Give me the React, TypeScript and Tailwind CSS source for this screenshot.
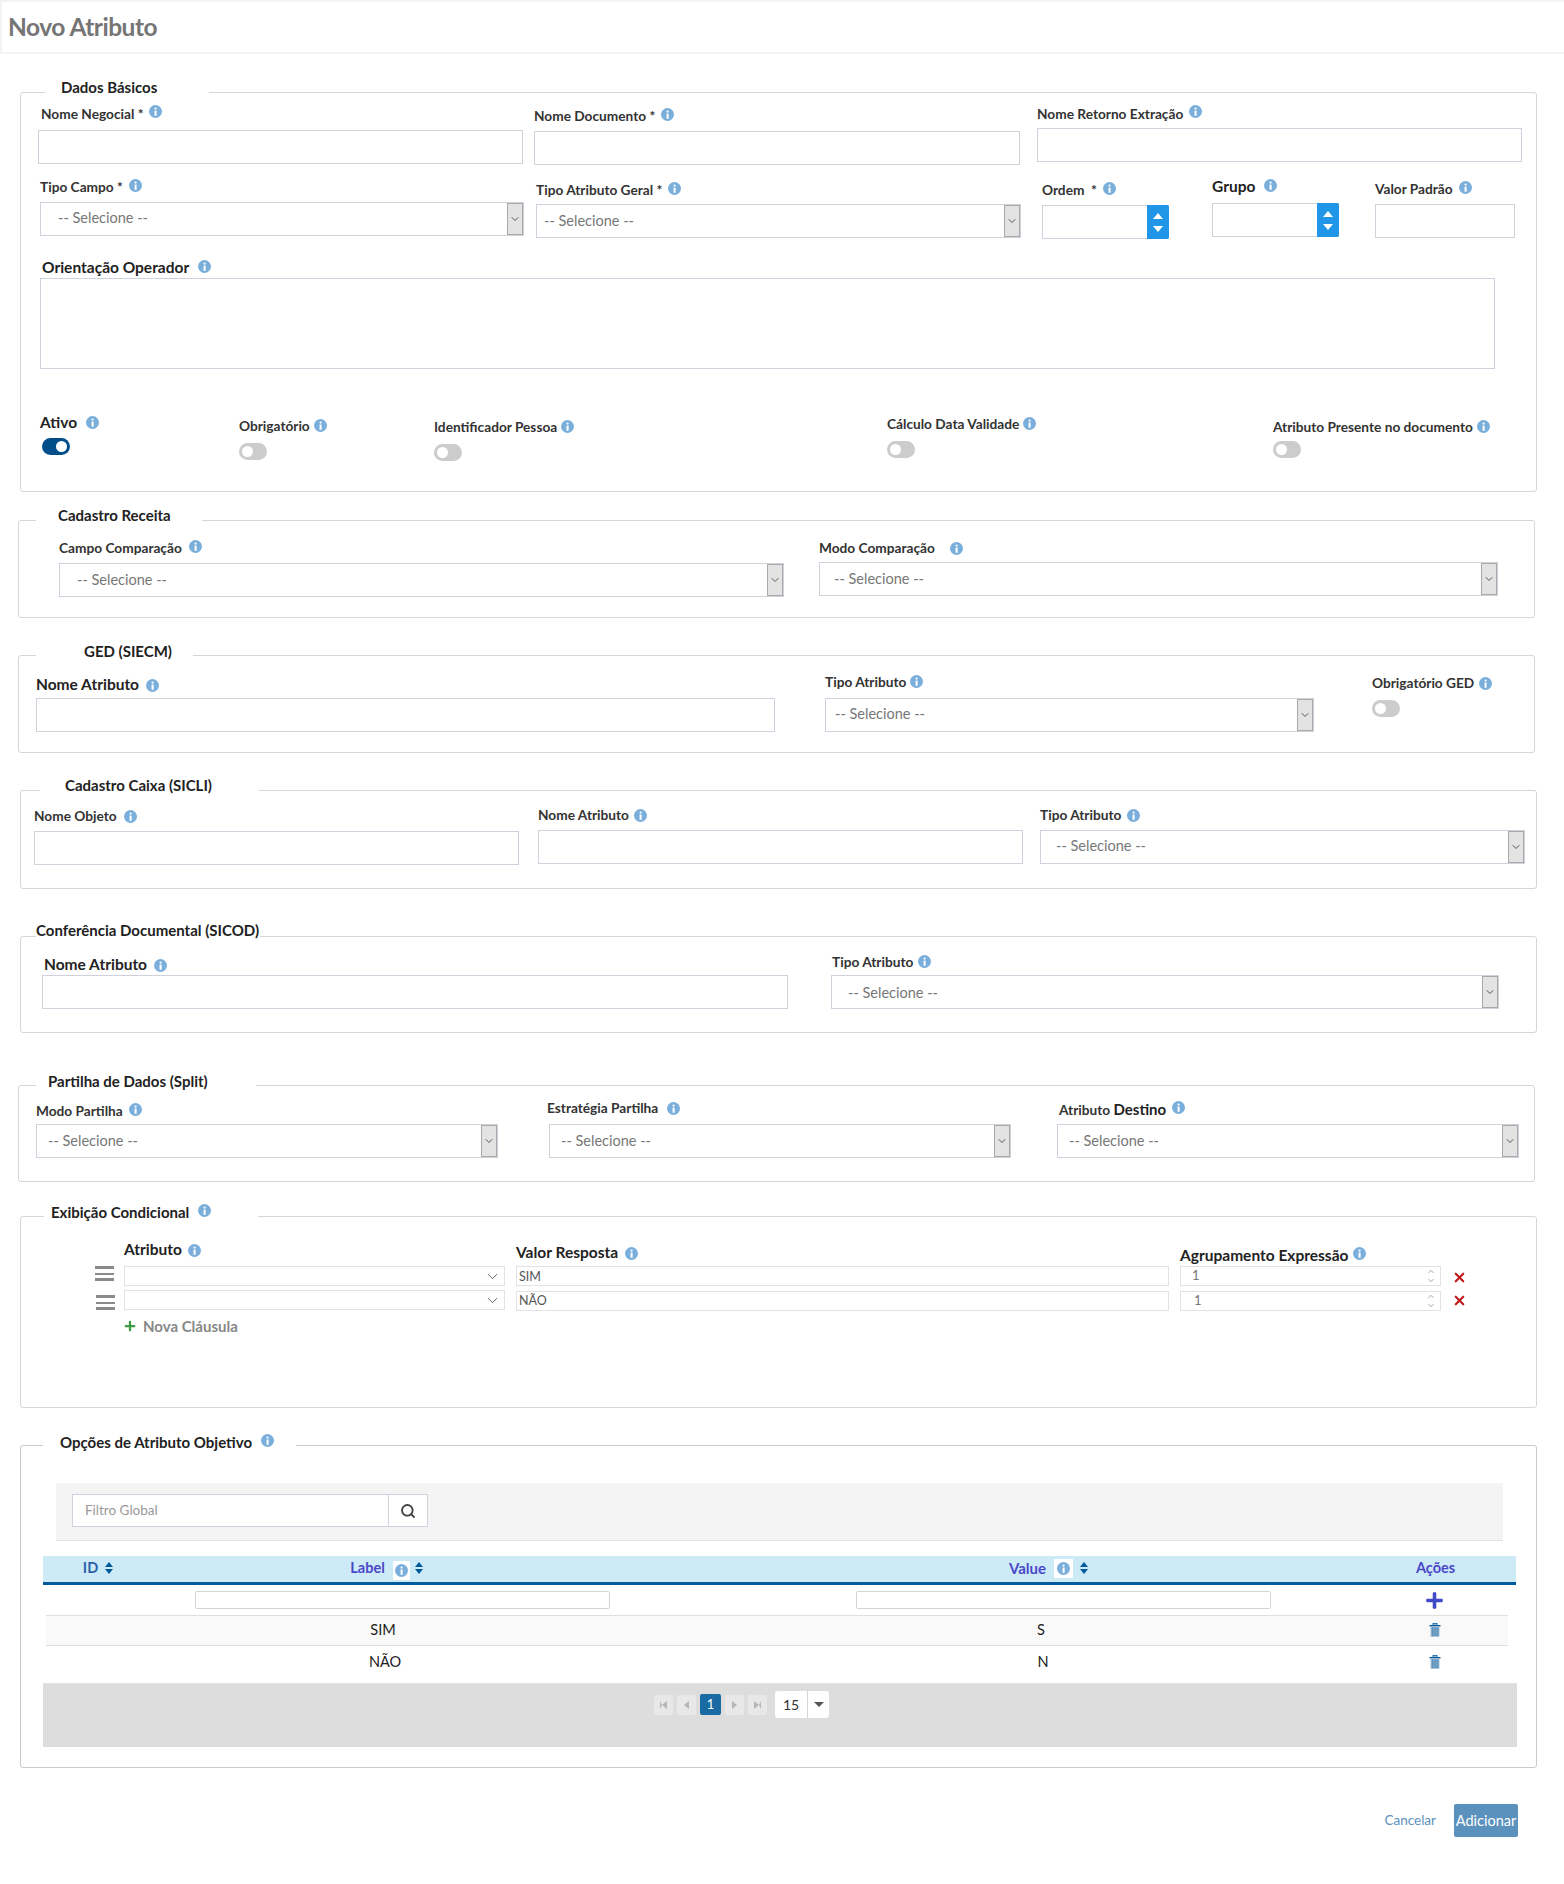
import type { ReactNode } from "react";
import { ChevronDown, ChevronUp, Search, X } from "lucide-react";
import { FaPlus } from "react-icons/fa";

function Info({ className = "ml-[6px] -mt-[3px]" }: { className?: string }) {
    return (
        <svg viewBox="0 0 14 14" className={`w-[13px] h-[13px] shrink-0 ${className}`}>
            <circle cx="7" cy="7" r="7" fill="#7aaedb" />
            <rect x="6" y="6" width="2.2" height="5.6" fill="#fff" />
            <circle cx="7.1" cy="3.8" r="1.2" fill="#fff" />
        </svg>
    );
}

function Label({ text, large, className = "", infoClass }: { text: ReactNode; large?: boolean; className?: string; infoClass?: string }) {
    return (
        <div className={`flex items-center h-[18px] font-bold whitespace-nowrap ${large ? "text-[15.5px] text-[#222]" : "text-[13.7px] text-[#333]"} ${className}`}>
            <span>{text}</span>
            <Info className={infoClass} />
        </div>
    );
}

function TextBox({ className = "" }: { className?: string }) {
    return <input className={`block w-full h-[34px] bg-white border border-[#d0d1dc] outline-none ${className}`} />;
}

function SelectBox({ padding }: { padding: string }) {
    return (
        <div className="flex w-full h-[34px] bg-white border border-[#d0d1dc]">
            <span className={`flex-1 flex items-center text-[14.5px] text-[#777] ${padding}`}>-- Selecione --</span>
            <span className="w-[16px] flex items-center justify-center bg-[#e3e3e3] border border-[#a9a9a9]">
                <ChevronDown className="w-[12px] h-[12px] text-[#555]" />
            </span>
        </div>
    );
}

function NumberBox() {
    return (
        <div className="flex w-full h-[34px] bg-white border border-[#d0d1dc]">
            <span className="flex-1" />
            <span className="w-[22px] -my-px -mr-px rounded-r-[2px] bg-[#2196e8] flex flex-col items-center justify-center gap-[7px]">
                <span className="w-0 h-0 border-x-[5px] border-x-transparent border-b-[6px] border-b-white" />
                <span className="w-0 h-0 border-x-[5px] border-x-transparent border-t-[6px] border-t-white" />
            </span>
        </div>
    );
}

function Toggle({ on = false }: { on?: boolean }) {
    return on ? (
        <div className="w-[28px] h-[17px] rounded-full bg-[#004f8b] flex items-center justify-end pr-[3px]">
            <span className="w-[11px] h-[11px] rounded-full bg-white" />
        </div>
    ) : (
        <div className="w-[28px] h-[17px] rounded-full bg-[#cccccc] flex items-center pl-[3px]">
            <span className="w-[11px] h-[11px] rounded-full bg-white" />
        </div>
    );
}

function Section({ outer, legend, title, info, children, height }: {
    outer: string;
    legend: string;
    title: string;
    info?: boolean;
    children: ReactNode;
    height: string;
}) {
    return (
        <fieldset className={`block border border-[#d6d6d6] rounded-[3px] p-0 ${outer} ${height}`}>
            <legend className={`flex items-center h-[20px] text-[15px] font-bold text-[#222] whitespace-nowrap ${legend}`}>
                {title}
                {info && <Info className="ml-[9px] -mt-[3px]" />}
            </legend>
            {children}
        </fieldset>
    );
}

function Burger({ className }: { className: string }) {
    return (
        <div className={`w-[19px] h-[15px] flex flex-col justify-between ${className}`}>
            <span className="h-[3px] bg-[#8a8a8a]" />
            <span className="h-[2px] bg-[#8a8a8a]" />
            <span className="h-[3px] bg-[#8a8a8a]" />
        </div>
    );
}

function ClauseRow({ burger, second }: { burger: string; second?: boolean }) {
    return (
        <div className={`flex items-start ${second ? "mt-[4px]" : ""}`}>
            <Burger className={burger} />
            <div className="w-[381px] h-[20px] border border-[#e2e2e2] bg-white flex items-center justify-end pr-[3px]">
                <ChevronDown className="w-[17px] h-[17px] text-[#555]" strokeWidth={1.3} />
            </div>
        </div>
    );
}

function ValueBox({ value, className }: { value: string; className: string }) {
    return (
        <div className={`w-[653px] h-[20px] border border-[#e2e2e2] bg-white flex items-center pl-[2px] text-[12.5px] text-[#555] ${className}`}>
            {value}
        </div>
    );
}

function GroupBox({ className, pad }: { className: string; pad: string }) {
    return (
        <div className={`w-[261px] h-[20px] border border-[#e2e2e2] bg-white flex items-center justify-between pr-[3px] text-[13px] text-[#777] ${pad} ${className}`}>
            <span>1</span>
            <span className="flex flex-col">
                <ChevronUp className="w-[12px] h-[9px] text-[#666]" strokeWidth={1.6} />
                <ChevronDown className="w-[12px] h-[9px] text-[#666]" strokeWidth={1.6} />
            </span>
        </div>
    );
}

function Sort({ className = "" }: { className?: string }) {
    return (
        <span className={`flex flex-col gap-[2px] ${className}`}>
            <span className="w-0 h-0 border-x-[4px] border-x-transparent border-b-[5px] border-b-[#005a9c]" />
            <span className="w-0 h-0 border-x-[4px] border-x-transparent border-t-[5px] border-t-[#005a9c]" />
        </span>
    );
}

function Trash({ className = "" }: { className?: string }) {
    return (
        <svg viewBox="0 0 12 14" className={`w-[12px] h-[14px] ${className}`}>
            <rect x="0.5" y="2" width="11" height="1.4" fill="#005a9c" />
            <rect x="4" y="0.4" width="4" height="1.6" fill="none" stroke="#005a9c" strokeWidth="0.8" />
            <rect x="1.6" y="4" width="8.8" height="9.6" fill="#8fb4d3" />
            <path d="M3.4 4.4v9M5.2 4.4v9M7 4.4v9M8.8 4.4v9" stroke="#3a78a8" strokeWidth="0.7" />
        </svg>
    );
}

function PageButton({ children }: { children: ReactNode }) {
    return <span className="w-[19px] h-[20px] rounded-[2px] bg-[#e8e8e8] flex items-center justify-center">{children}</span>;
}

const tri = "w-0 h-0 border-y-[4px] border-y-transparent";

export default function App() {
    return (
        <div className="relative w-[1564px] min-h-[1884px] bg-white font-['Lato','Liberation_Sans',sans-serif] overflow-hidden">
            <div className="h-[54px] border-t-2 border-l-2 border-b-2 border-[#f3f3f3] flex items-center pl-[6px]">
                <h1 className="text-[24.5px] font-bold text-[#757575] tracking-[-0.5px]">Novo Atributo</h1>
            </div>

            {/* Dados Basicos */}
            <Section outer="mt-[28px] ml-[20px] w-[1517px]" height="h-[410px]" legend="ml-[24px] pl-[16px] w-[164px] -translate-y-[5px]" title="Dados Básicos">
                <div className="flex items-start">
                    <div className="ml-[17px] w-[485px] mt-[3px]">
                        <Label text="Nome Negocial *" className="ml-[3px]" infoClass="ml-[6px] -mt-[5px]" />
                        <div className="mt-[7px]"><TextBox /></div>
                    </div>
                    <div className="ml-[11px] w-[486px] mt-[5px]">
                        <Label text="Nome Documento *" />
                        <div className="mt-[6px]"><TextBox /></div>
                    </div>
                    <div className="ml-[17px] w-[485px] mt-[3px]">
                        <Label text="Nome Retorno Extração" infoClass="ml-[6px] -mt-[6px]" />
                        <div className="mt-[5px]"><TextBox /></div>
                    </div>
                </div>
                <div className="flex items-start mt-[10px]">
                    <div className="ml-[19px] w-[484px] mt-[3px]">
                        <Label text="Tipo Campo *" />
                        <div className="mt-[6px]"><SelectBox padding="pl-[17px] pb-[3px]" /></div>
                    </div>
                    <div className="ml-[12px] w-[485px] mt-[6px]">
                        <Label text="Tipo Atributo Geral *" />
                        <div className="mt-[5px]"><SelectBox padding="pl-[7px] pb-[1px]" /></div>
                    </div>
                    <div className="ml-[21px] w-[127px] mt-[6px]">
                        <Label text={"Ordem\u00a0\u00a0*"} />
                        <div className="mt-[6px]"><NumberBox /></div>
                    </div>
                    <div className="ml-[43px] w-[127px] mt-[3px]">
                        <Label text="Grupo" large infoClass="ml-[9px] -mt-[4px]" />
                        <div className="mt-[7px]"><NumberBox /></div>
                    </div>
                    <div className="ml-[36px] w-[140px] mt-[5px]">
                        <Label text="Valor Padrão" />
                        <div className="mt-[6px]"><TextBox /></div>
                    </div>
                </div>
                <div className="ml-[19px] w-[1455px] mt-[20px]">
                    <Label text="Orientação Operador" large className="ml-[2px]" infoClass="ml-[9px] -mt-[3px]" />
                    <textarea className="block mt-px w-full h-[91px] border border-[#d0d1dc] outline-none resize-none" />
                </div>
                <div className="flex items-start pl-[19px]">
                    <div className="w-[199px] mt-[45px]">
                        <Label text="Ativo" large infoClass="ml-[9px] -mt-[1px]" />
                        <div className="mt-[6px] ml-[2px]"><Toggle on /></div>
                    </div>
                    <div className="w-[195px] mt-[48px]">
                        <Label text="Obrigatório" infoClass="ml-[4px] -mt-[1px]" />
                        <div className="mt-[8px]"><Toggle /></div>
                    </div>
                    <div className="w-[453px] mt-[49px]">
                        <Label text="Identificador Pessoa" infoClass="ml-[4px] -mt-[2px]" />
                        <div className="mt-[8px]"><Toggle /></div>
                    </div>
                    <div className="w-[386px] mt-[46px]">
                        <Label text="Cálculo Data Validade" infoClass="ml-[4px] -mt-[1px]" />
                        <div className="mt-[8px]"><Toggle /></div>
                    </div>
                    <div className="mt-[49px]">
                        <Label text="Atributo Presente no documento" infoClass="ml-[4px] -mt-[1px]" />
                        <div className="mt-[5px]"><Toggle /></div>
                    </div>
                </div>
            </Section>

            {/* Cadastro Receita */}
            <Section outer="mt-[18px] ml-[18px] w-[1517px]" height="h-[108px]" legend="ml-[17px] pl-[22px] w-[166px] -translate-y-[5px]" title="Cadastro Receita">
                <div className="flex items-start">
                    <div className="ml-[40px] w-[725px] mt-[9px]">
                        <Label text="Campo Comparação" infoClass="ml-[7px] -mt-[3px]" />
                        <div className="mt-[6px]"><SelectBox padding="pl-[17px]" /></div>
                    </div>
                    <div className="ml-[35px] w-[679px] mt-[9px]">
                        <Label text="Modo Comparação" infoClass="ml-[15px]" />
                        <div className="mt-[5px]"><SelectBox padding="pl-[14px] pb-[1px]" /></div>
                    </div>
                </div>
            </Section>

            {/* GED */}
            <Section outer="mt-[27px] ml-[18px] w-[1517px]" height="h-[108px]" legend="ml-[17px] pl-[48px] w-[157px] -translate-y-[4px]" title="GED (SIECM)">
                <div className="flex items-start">
                    <div className="ml-[17px] w-[739px] mt-[11px]">
                        <Label text="Nome Atributo" large infoClass="ml-[7px]" />
                        <div className="mt-[4px]"><TextBox /></div>
                    </div>
                    <div className="ml-[50px] w-[489px] mt-[8px]">
                        <Label text="Tipo Atributo" infoClass="ml-[4px] -mt-[1px]" />
                        <div className="mt-[7px]"><SelectBox padding="pl-[9px] pb-[3px]" /></div>
                    </div>
                    <div className="ml-[58px] mt-[9px]">
                        <Label text="Obrigatório GED" infoClass="ml-[5px]" />
                        <div className="mt-[8px]"><Toggle /></div>
                    </div>
                </div>
            </Section>

            {/* Cadastro Caixa */}
            <Section outer="mt-[27px] ml-[20px] w-[1517px]" height="h-[109px]" legend="ml-[19px] pl-[25px] w-[219px] -translate-y-[5px]" title="Cadastro Caixa (SICLI)">
                <div className="flex items-start">
                    <div className="ml-[13px] w-[485px] mt-[7px]">
                        <Label text="Nome Objeto" infoClass="ml-[7px]" />
                        <div className="mt-[6px]"><TextBox /></div>
                    </div>
                    <div className="ml-[19px] w-[485px] mt-[6px]">
                        <Label text="Nome Atributo" infoClass="ml-[5px]" />
                        <div className="mt-[6px]"><TextBox /></div>
                    </div>
                    <div className="ml-[17px] w-[485px] mt-[6px]">
                        <Label text="Tipo Atributo" infoClass="ml-[6px]" />
                        <div className="mt-[6px]"><SelectBox padding="pl-[15px] pb-[3px]" /></div>
                    </div>
                </div>
            </Section>

            {/* Conferencia Documental */}
            <Section outer="mt-[37px] ml-[20px] w-[1517px]" height="h-[107px]" legend="ml-[15px] w-[224px] -translate-y-[6px]" title="Conferência Documental (SICOD)">
                <div className="flex items-start">
                    <div className="ml-[21px] w-[746px] mt-[10px]">
                        <Label text="Nome Atributo" large className="ml-[2px]" infoClass="ml-[7px]" />
                        <div className="mt-px"><TextBox /></div>
                    </div>
                    <div className="ml-[43px] w-[668px] mt-[7px]">
                        <Label text="Tipo Atributo" className="ml-px" infoClass="ml-[5px] -mt-[1px]" />
                        <div className="mt-[4px]"><SelectBox padding="pl-[16px] pt-[1px]" /></div>
                    </div>
                </div>
            </Section>

            {/* Partilha */}
            <Section outer="mt-[42px] ml-[18px] w-[1517px]" height="h-[107px]" legend="ml-[17px] pl-[12px] w-[220px] -translate-y-[4px]" title="Partilha de Dados (Split)">
                <div className="flex items-start">
                    <div className="ml-[17px] w-[462px] mt-[7px]">
                        <Label text="Modo Partilha" infoClass="ml-[6px] -mt-[3px]" />
                        <div className="mt-[4px]"><SelectBox padding="pl-[11px]" /></div>
                    </div>
                    <div className="ml-[51px] w-[462px] mt-[4px]">
                        <Label text="Estratégia Partilha" className="-ml-[2px]" infoClass="ml-[9px]" />
                        <div className="mt-[7px]"><SelectBox padding="pl-[11px]" /></div>
                    </div>
                    <div className="ml-[46px] w-[462px] mt-[5px]">
                        <Label
                            text={<>Atributo <span className="text-[15px] text-[#222]">Destino</span></>}
                            className="ml-[2px]"
                            infoClass="ml-[6px] -mt-[3px]"
                        />
                        <div className="mt-[6px]"><SelectBox padding="pl-[11px]" /></div>
                    </div>
                </div>
            </Section>

            {/* Exibicao Condicional */}
            <Section outer="mt-[24px] ml-[20px] w-[1517px]" height="h-[202px]" legend="ml-[23px] pl-[7px] w-[214px] -translate-y-[4px]" title="Exibição Condicional" info>
                <div className="flex items-start mt-[15px]">
                    <div className="ml-[103px] w-[392px]">
                        <Label text="Atributo" large infoClass="ml-[6px]" />
                    </div>
                    <div className="mt-[3px] w-[664px]">
                        <Label text="Valor Resposta" large infoClass="ml-[7px]" />
                    </div>
                    <div className="mt-[6px]">
                        <Label text="Agrupamento Expressão" large infoClass="ml-[5px] -mt-[6px]" />
                    </div>
                </div>
                <div className="flex items-start mt-px">
                    <div className="ml-[74px] w-[421px]">
                        <ClauseRow burger="mr-[10px]" />
                        <ClauseRow burger="ml-px mr-[9px] mt-[5px]" second />
                        <div className="flex items-center ml-[29px] mt-[5px] text-[15px] font-bold text-[#888]">
                            <FaPlus className="w-[12px] h-[12px] text-[#3f9a45] mr-[7px]" />
                            Nova Cláusula
                        </div>
                    </div>
                    <div className="w-[664px]">
                        <ValueBox value="SIM" className="pt-[2px]" />
                        <ValueBox value="NÃO" className="mt-[5px] pt-[1px]" />
                    </div>
                    <div className="w-[272px]">
                        <GroupBox className="" pad="pl-[11px]" />
                        <GroupBox className="mt-[5px]" pad="pl-[13px]" />
                    </div>
                    <div className="flex flex-col">
                        <X className="w-[15px] h-[15px] mt-[4px] text-[#c01a1a]" strokeWidth={3.4} />
                        <X className="w-[15px] h-[15px] mt-[8px] text-[#c01a1a]" strokeWidth={3.4} />
                    </div>
                </div>
            </Section>

            {/* Opcoes */}
            <Section outer="mt-[27px] ml-[20px] w-[1517px] !border-[#c9c9c9]" height="h-[333px]" legend="ml-[22px] pl-[17px] w-[253px] -translate-y-[3px]" title="Opções de Atributo Objetivo" info>
                <div className="mt-[28px] ml-[35px] w-[1447px] h-[58px] bg-[#f4f4f4] border-b border-[#e2e2e2] pt-[11px] pl-[16px] rounded-tl-[3px]">
                    <div className="flex w-[356px] h-[33px] bg-white border border-[#d0d1dc]">
                        <span className="flex-1 flex items-center pl-[12px] text-[13.5px] text-[#999]">Filtro Global</span>
                        <span className="w-[39px] border-l border-[#d0d1dc] flex items-center justify-center">
                            <Search className="w-[16px] h-[16px] text-[#444]" strokeWidth={2.8} />
                        </span>
                    </div>
                </div>
                <div className="ml-[22px] mt-[15px] w-[1473px]">
                    <div className="flex items-center h-[29px] bg-[#cdeaf7] border-b-[3px] border-[#005a9c] text-[14.5px] font-bold">
                        <div className="w-[152px] flex items-center justify-center pr-[42px] -translate-y-px">
                            <span className="text-[#2c5fa8]">ID</span>
                            <Sort className="ml-[7px]" />
                        </div>
                        <div className="w-[415px] flex items-center justify-center pr-[32px] -translate-y-px">
                            <span className="text-[#4a48c8]">Label</span>
                            <span className="ml-[8px] bg-white px-[2px] py-[3px] translate-y-[2px]"><Info className="" /></span>
                            <Sort className="ml-[5px]" />
                        </div>
                        <div className="w-[246px]" />
                        <div className="w-[415px] flex items-center justify-center pr-[30px] -translate-y-px">
                            <span className="text-[15px] text-[#4a48c8]">Value</span>
                            <span className="ml-[8px] bg-white px-[3px] py-[3px]"><Info className="" /></span>
                            <Sort className="ml-[7px]" />
                        </div>
                        <div className="w-[245px] text-[#4a48c8] pl-[145px] -translate-y-px">Ações</div>
                    </div>
                    <div className="flex items-center h-[30px]">
                        <input className="ml-[152px] w-[415px] h-[18px] border border-[#d4d4d4] rounded-[2px] outline-none" />
                        <input className="ml-[246px] w-[415px] h-[18px] border border-[#d4d4d4] rounded-[2px] outline-none" />
                        <FaPlus className="ml-[154px] w-[19px] h-[19px] text-[#4049c8]" />
                    </div>
                    <div className="flex items-center ml-[3px] w-[1462px] h-[31px] bg-[#f9f9f9] border-y border-[#dfdfdf] text-[14.5px] text-[#222] text-center">
                        <span className="ml-[292px] w-[90px] pb-[2px]">SIM</span>
                        <span className="ml-[568px] w-[90px] pb-[2px]">S</span>
                        <Trash className="ml-[343px] -translate-y-px" />
                    </div>
                    <div className="flex items-center ml-[3px] w-[1462px] h-[37px] text-[14.5px] text-[#222] text-center">
                        <span className="ml-[294px] w-[90px] pb-[5px]">NÃO</span>
                        <span className="ml-[568px] w-[90px] pb-[5px]">N</span>
                        <Trash className="ml-[341px] -translate-y-[3px]" />
                    </div>
                    <div className="w-[1474px] h-[64px] bg-[#dddddd] border-t border-[#e2e2e2] flex items-start pt-[7px] pl-[611px]">
                        <div className="flex items-center gap-[4px] mt-[3px]">
                            <PageButton><span className={`${tri} border-r-[5px] border-r-[#b5b5b5] border-l-[2px] border-l-[#b5b5b5]`} /></PageButton>
                            <PageButton><span className={`${tri} border-r-[5px] border-r-[#b5b5b5]`} /></PageButton>
                            <span className="w-[21px] h-[21px] rounded-[2px] bg-[#1a6aa3] text-white text-[13px] flex items-center justify-center">1</span>
                            <PageButton><span className={`${tri} border-l-[5px] border-l-[#b5b5b5]`} /></PageButton>
                            <PageButton><span className={`${tri} border-l-[5px] border-l-[#b5b5b5] border-r-[2px] border-r-[#b5b5b5]`} /></PageButton>
                        </div>
                        <div className="ml-[8px] w-[54px] h-[27px] rounded-[3px] bg-white flex items-center text-[14px] text-[#333]">
                            <span className="w-[33px] text-center border-r border-[#d5d5d5] leading-[27px]">15</span>
                            <span className="flex-1 flex justify-center">
                                <span className="w-0 h-0 border-x-[5px] border-x-transparent border-t-[5px] border-t-[#555]" />
                            </span>
                        </div>
                    </div>
                </div>
            </Section>

            <div className="mt-[36px] flex items-center justify-end pr-[46px]">
                <span className="text-[13.5px] text-[#5b91bd] mr-[18px]">Cancelar</span>
                <span className="w-[64px] h-[33px] rounded-[2px] bg-[#5b91bd] text-white text-[14.5px] flex items-center justify-center overflow-hidden whitespace-nowrap">Adicionar</span>
            </div>
        </div>
    );
}
